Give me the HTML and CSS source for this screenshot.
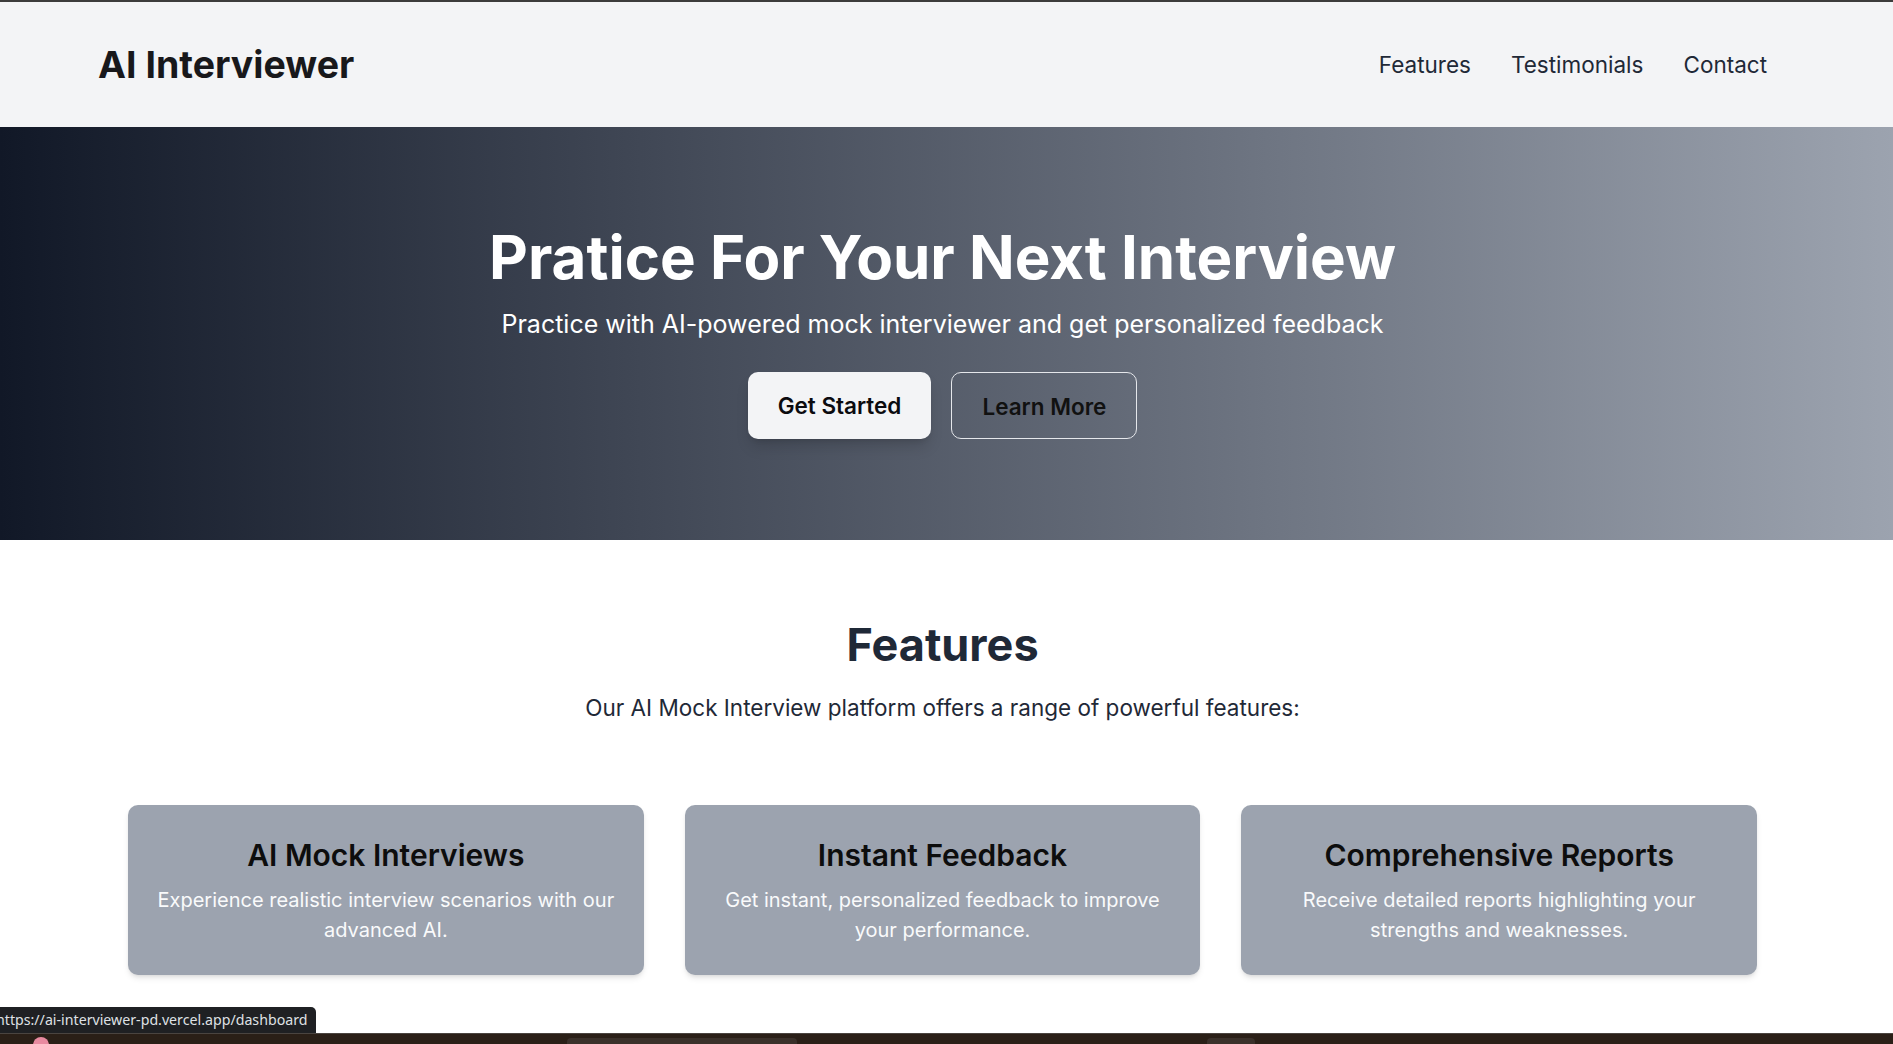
FILE: index.html
```html
<!DOCTYPE html>
<html lang="en">
<head>
<meta charset="utf-8">
<title>AI Interviewer</title>
<link rel="stylesheet" href="styles.css">
</head>
<body>
  <div class="chrome-edge"></div>
  <header class="site-header">
    <div class="brand">AI Interviewer</div>
    <nav class="nav">
      <a href="#features" class="nav-link">Features</a>
      <a href="#testimonials" class="nav-link">Testimonials</a>
      <a href="#contact" class="nav-link">Contact</a>
    </nav>
  </header>

  <section class="hero">
    <h1 class="hero-title">Pratice For Your Next Interview</h1>
    <p class="hero-sub">Practice with AI-powered mock interviewer and get personalized feedback</p>
    <div class="hero-actions">
      <a href="#" class="btn btn-primary">Get Started</a>
      <a href="#" class="btn btn-outline">Learn More</a>
    </div>
  </section>

  <section class="features" id="features">
    <h2 class="features-title">Features</h2>
    <p class="features-sub">Our AI Mock Interview platform offers a range of powerful features:</p>
    <div class="cards">
      <div class="card">
        <h3 class="card-title">AI Mock Interviews</h3>
        <p class="card-text">Experience realistic interview scenarios with our advanced AI.</p>
      </div>
      <div class="card">
        <h3 class="card-title">Instant Feedback</h3>
        <p class="card-text">Get instant, personalized feedback to improve your performance.</p>
      </div>
      <div class="card">
        <h3 class="card-title">Comprehensive Reports</h3>
        <p class="card-text">Receive detailed reports highlighting your strengths and weaknesses.</p>
      </div>
    </div>
  </section>

  <div class="status-tip">https://ai-interviewer-pd.vercel.app/dashboard</div>
  <div class="taskbar">
    <span class="tb-dot"></span>
    <span class="tb-tab tb-tab-a"></span>
    <span class="tb-tab tb-tab-b"></span>
  </div>
</body>
</html>
```

FILE: styles.css
```css
* { box-sizing: border-box; }

html, body {
  margin: 0;
  padding: 0;
  background: #ffffff;
  font-family: Inter, "Noto Sans", "Liberation Sans", sans-serif;
  overflow: hidden;
}

.chrome-edge {
  height: 2px;
  background: #3c3c3c;
}

.site-header {
  height: 125px;
  background: #f3f4f6;
  display: flex;
  align-items: center;
  justify-content: space-between;
  padding: 0 126px 0 98px;
}

.brand {
  font-size: 37.5px;
  font-weight: 700;
  color: #18181b;
  line-height: 45px;
}

.nav {
  display: flex;
  gap: 40px;
}

.nav-link {
  font-size: 22.5px;
  line-height: 35px;
  color: #1f2937;
  text-decoration: none;
}

.hero {
  height: 413px;
  background: linear-gradient(to right, #111827, #9ca3af);
  padding: 100px 8px 0 0;
  display: flex;
  flex-direction: column;
  align-items: center;
  color: #ffffff;
}

.hero-title {
  margin: 0 0 20px;
  font-size: 60px;
  line-height: 60px;
  font-weight: 700;
}

.hero-sub {
  margin: 0 0 30px;
  font-size: 25px;
  line-height: 35px;
  color: #ffffff;
}

.hero-actions {
  display: flex;
  gap: 20px;
}

.btn {
  display: inline-block;
  padding: 15px 29px;
  border: 1px solid transparent;
  border-radius: 10px;
  font-size: 22.5px;
  line-height: 35px;
  font-weight: 600;
  text-decoration: none;
}

.btn-primary {
  background: #f3f4f6;
  color: #0b0b0f;
  box-shadow: 0 10px 15px -3px rgba(0,0,0,0.15), 0 4px 6px -4px rgba(0,0,0,0.15);
}

.btn-outline {
  background: transparent;
  border-color: #e5e7eb;
  color: #111111;
  padding: 16px 30px 14px;
}

.features {
  padding: 80px 136px 80px 128px;
  display: flex;
  flex-direction: column;
  align-items: center;
}

.features-title {
  margin: 0 0 20px;
  font-size: 45px;
  line-height: 50px;
  font-weight: 700;
  color: #1f2937;
}

.features-sub {
  margin: 0 0 80px;
  font-size: 22.5px;
  line-height: 35px;
  color: #1f2937;
}

.cards {
  width: 100%;
  display: grid;
  grid-template-columns: repeat(3, 1fr);
  gap: 41px;
}

.card {
  background: #9ca3af;
  border-radius: 10px;
  padding: 30px 24px;
  text-align: center;
  box-shadow: 0 4px 6px -1px rgba(0,0,0,0.1), 0 2px 4px -2px rgba(0,0,0,0.1);
}

.card-title {
  margin: 0 0 10px;
  font-size: 30px;
  line-height: 40px;
  font-weight: 600;
  color: #0d0d0d;
}

.card-text {
  margin: 0;
  font-size: 20px;
  line-height: 30px;
  color: #f9fafb;
}

.status-tip {
  position: fixed;
  left: 0;
  top: 1007px;
  width: 316px;
  height: 26px;
  text-indent: -4px;
  background: #1f2023;
  color: #dfe1e5;
  font-family: "Noto Sans", "Liberation Sans", sans-serif;
  font-size: 14.2px;
  line-height: 26px;
  border-top-right-radius: 5px;
  white-space: nowrap;
  overflow: hidden;
}

.taskbar {
  position: fixed;
  left: 0;
  right: 0;
  top: 1033px;
  height: 11px;
  background: #2a1f17;
  border-top: 1px solid #4a4440;
  overflow: hidden;
}

.tb-dot {
  position: absolute;
  left: 33px;
  top: 3px;
  width: 16px;
  height: 16px;
  border-radius: 50%;
  background: #e88aa0;
}

.tb-tab {
  position: absolute;
  top: 4px;
  height: 12px;
  border-radius: 4px;
  background: #3a302a;
}

.tb-tab-a { left: 567px; width: 230px; }
.tb-tab-b { left: 1207px; width: 48px; }
```
